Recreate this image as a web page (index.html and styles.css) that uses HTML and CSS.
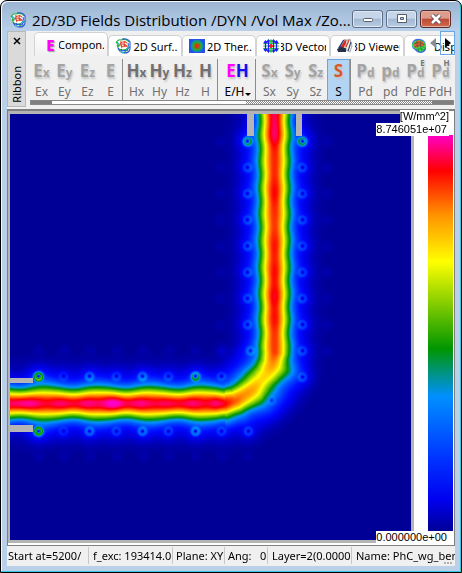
FILE: index.html
```html
<!DOCTYPE html>
<html lang="en">
<head>
    <meta charset="UTF-8">
    <meta name="viewport" content="width=device-width, initial-scale=1.0">
    <title>2D/3D Fields Distribution</title>
    <link rel="stylesheet" href="styles.css">
</head>
<body>
    <svg class="defs" width="0" height="0" aria-hidden="true">
        <symbol id="mesh" viewBox="0 0 16 16">
            <path fill="#fff" d="M3 2 L11 1 L15 5 L15 11 L9 15 L3 12 L1 6Z"/>
            <g fill="none" stroke-width="1.1">
                <path stroke="#e0452a" d="M5 6 Q8 2 12 5 M3 8 Q8 4 12 8 M6 9 Q9 7 13 9 M6 3 Q5 6 7 10 M10 3 Q8 6 10 9"/>
                <path stroke="#1fb53a" d="M1 5 Q3 1 6 2 Q11 0 14 4 M2 7 Q3 12 7 13 M4 11 Q9 14 15 9 M1 4 Q3 6 4 9 M12 10 Q12 13 9 15"/>
                <path stroke="#2b52d8" d="M7 1 Q13 0 15 4 V11 M3 10 Q5 15 10 15 Q14 15 15 11 M6 11 Q7 14 11 12 M13 5 Q14 9 12 13"/>
                <path stroke="#38b8d8" d="M2 4 L5 7 M11 12 L14 8 M5 13 L8 15"/>
            </g>
        </symbol>
    </svg>

    <div class="window">
        <header class="titlebar">
            <svg class="app-icon" aria-hidden="true"><use href="#mesh"/></svg>
            <h1>2D/3D Fields Distribution /DYN /Vol Max /Zo...</h1>
            <div class="caption-buttons">
                <button class="caption-btn" aria-label="Minimize">
                    <svg width="12" height="12" viewBox="0 0 12 12"><rect x="1.5" y="5.5" width="9" height="3" rx="1" fill="#fff" stroke="#535d6b"/></svg>
                </button>
                <button class="caption-btn" aria-label="Maximize">
                    <svg width="12" height="12" viewBox="0 0 12 12"><path fill="#fff" fill-rule="evenodd" stroke="#535d6b" d="M1.5 1.5h9v8h-9z M4.5 4.5h3v2h-3z"/></svg>
                </button>
                <button class="caption-btn close" aria-label="Close">
                    <svg width="12" height="12" viewBox="0 0 12 12"><path stroke="#5f4a4e" stroke-width="4.500" d="M2 2 L10 10 M10 2 L2 10"/><path stroke="#fff" stroke-width="2.600" d="M2 2 L10 10 M10 2 L2 10"/></svg>
                </button>
            </div>
        </header>

        <main class="client">
            <section class="ribbon">
                <div class="ribbon-grip">
                    <button class="ribbon-close" aria-label="Close ribbon">
                        <svg width="8" height="8" viewBox="0 0 8 8"><path stroke="#000" stroke-width="1.5" d="M1 1 L7 7 M7 1 L1 7"/></svg>
                    </button>
                    <span class="ribbon-name">Ribbon</span>
                </div>
                <div class="ribbon-body">
                    <div class="tabs">
                        <button class="tab active"><span class="tab-e" aria-hidden="true">E</span><span class="tab-text">Compon.</span></button>
                        <button class="tab"><svg class="tab-icon" aria-hidden="true"><use href="#mesh"/></svg><span class="tab-text">2D Surf..</span></button>
                        <button class="tab"><i class="tab-icon thermal"></i><span class="tab-text">2D Ther..</span></button>
                        <button class="tab">
                            <svg class="tab-icon" viewBox="0 0 16 16" fill="none" aria-hidden="true">
                                <path stroke="#2fd23a" stroke-width="1" d="M0 5.500h16M0 8h16M0 10.500h16"/>
                                <path stroke="#1a1aff" stroke-width="1.300" d="M2.500 3v10M5.500 2v12M10.500 2v12M13.500 3v10M1 5l1.500-2L4 5M4 4l1.500-2L7 4M9 4l1.500-2L12 4M12 5l1.500-2L15 5M1 11l1.500 2L4 11M4 12l1.500 2L7 12M9 12l1.500 2L12 12M12 11l1.500 2L15 11"/>
                                <path stroke="#21c62b" stroke-width="1.300" d="M8 2v12M6.500 4L8 2l1.500 2M6.500 12L8 14l1.500-2"/>
                                <path stroke="#f02020" stroke-width="1.800" d="M8 6v4M6 8h4"/>
                            </svg>
                            <span class="tab-text">3D Vector</span>
                        </button>
                        <button class="tab">
                            <svg class="tab-icon" viewBox="0 0 16 16" aria-hidden="true">
                                <path fill="#23408e" d="M1 10 L6 2 L9 1 L6 10Z"/>
                                <path fill="#f3c59a" d="M4 8 L8 1 H11 L8 9Z"/>
                                <path fill="#d9281c" d="M3 10 L8 2 L10 3 L6 11Z"/>
                                <path fill="#26304a" d="M0 11 L4 9 L9 10 L9 14 L1 14Z"/>
                                <path fill="#f4f4f4" stroke="#777" stroke-width=".6" d="M9 3 L13 1 L15 8 L13 14 L9 12Z"/>
                                <path stroke="#d0402c" stroke-width="1.300" d="M12 2 L9 9"/>
                                <path stroke="#3a4a70" stroke-width="1.200" d="M14 4 L11 13"/>
                            </svg>
                            <span class="tab-text">3D Viewer</span>
                        </button>
                        <button class="tab">
                            <svg class="tab-icon" viewBox="0 0 16 16" aria-hidden="true">
                                <path fill="#3f6af0" d="M1 5 Q3 0 9 1 Q15 2 15 8 Q16 14 10 15 Q6 15 4 12 Q0 10 1 5Z"/>
                                <path fill="#3ddc48" d="M1 6 Q3 2 9 2 Q14 3 15 8 Q14 12 10 14 Q6 13 5 11 Q1 10 1 6Z"/>
                                <path fill="#f0542c" d="M3 6 Q6 1 10 3 Q14 5 13 8 Q8 8 4 10Z"/>
                                <path fill="none" stroke="#17613a" stroke-width=".5" d="M2 6 Q8 3 14 7 M3 9 Q8 6 14 10 M5 12 Q9 9 14 12 M6 2 Q5 7 8 14 M10 2 Q8 7 11 14"/>
                            </svg>
                            <span class="tab-text tab-text-last">Displ</span>
                        </button>
                        <div class="tab-scroll">
                            <button class="scroll-btn" aria-label="Previous tabs"><svg width="6" height="10" viewBox="0 0 6 10"><path fill="#8c8c8c" d="M6 0v10L0 5z"/></svg></button>
                            <button class="scroll-btn next" aria-label="Next tabs"><svg width="6" height="10" viewBox="0 0 6 10"><path d="M0 0v10l6-5z"/></svg></button>
                        </div>
                    </div>

                    <div class="tools">
                        <div class="group light">
                            <button class="tool"><b aria-hidden="true">E<small>x</small></b><span>Ex</span></button>
                            <button class="tool"><b aria-hidden="true">E<small>y</small></b><span>Ey</span></button>
                            <button class="tool"><b aria-hidden="true">E<small>z</small></b><span>Ez</span></button>
                            <button class="tool"><b aria-hidden="true">E</b><span>E</span></button>
                        </div>
                        <div class="group">
                            <button class="tool"><b aria-hidden="true">H<small>x</small></b><span>Hx</span></button>
                            <button class="tool"><b aria-hidden="true">H<small>y</small></b><span>Hy</span></button>
                            <button class="tool"><b aria-hidden="true">H<small>z</small></b><span>Hz</span></button>
                            <button class="tool"><b aria-hidden="true">H</b><span>H</span></button>
                        </div>
                        <div class="group">
                            <button class="tool eh"><b aria-hidden="true"><em>E</em>H</b><span>E/H<i class="drop"></i></span></button>
                        </div>
                        <div class="group light">
                            <button class="tool"><b aria-hidden="true">S<small>x</small></b><span>Sx</span></button>
                            <button class="tool"><b aria-hidden="true">S<small>y</small></b><span>Sy</span></button>
                            <button class="tool"><b aria-hidden="true">S<small>z</small></b><span>Sz</span></button>
                            <button class="tool selected"><b aria-hidden="true">S</b><span>S</span></button>
                        </div>
                        <div class="group light wide">
                            <button class="tool"><b aria-hidden="true">P<small>d</small></b><span>Pd</span></button>
                            <button class="tool"><b aria-hidden="true">p<small>d</small></b><span>pd</span></button>
                            <button class="tool"><b aria-hidden="true">P<small>d</small><sup>E</sup></b><span>PdE</span></button>
                            <button class="tool"><b aria-hidden="true">P<small>d</small><sup>H</sup></b><span>PdH</span></button>
                        </div>
                    </div>
                    <div class="tool-progress"><i></i></div>
                </div>
            </section>

            <section class="view">
                <div class="plot">
                    <canvas id="field" width="401" height="426"></canvas>
                </div>
                <div class="scale"></div>
                <div class="scale-max">
                    <span class="unit">[W/mm^2]</span>
                    <span class="value">8.746051e+07</span>
                </div>
                <span class="scale-min">0.000000e+00</span>
            </section>

            <footer class="statusbar">
                <span class="start">Start at=5200/</span>
                <span class="freq">f_exc: 193414.0</span>
                <span class="plane">Plane: XY</span>
                <span class="angle">Ang:&nbsp;&nbsp; 0</span>
                <span class="layer">Layer=2(0.0000</span>
                <span class="name">Name: PhC_wg_bend</span>
                <i class="size-grip"></i>
            </footer>
        </main>
    </div>

    <script src="field.js"></script>
</body>
</html>
```

FILE: styles.css
```css
:root {
    --frame: #bad0e8;
    --face: #f0f0f0;
    --wall: #b4b4b4;
    --ui-font: "Noto Sans", "DejaVu Sans", sans-serif;
}
* {
    box-sizing: border-box;
}
body {
    margin: 0;
    background: #fff;
    font-family: var(--ui-font);
    font-size: 12px;
    color: #000;
}
button {
    font: inherit;
    color: inherit;
    margin: 0;
    padding: 0;
    border: none;
    background: none;
}
.defs {
    position: absolute;
}
.window {
    display: flex;
    flex-direction: column;
    height: 100vh;
    padding: 0 6px 6px;
    border: 1px solid #000;
    border-radius: 7px 7px 0 0;
    background: linear-gradient(#9ab4d1, #b9d0ea 30px, var(--frame) 90px);
    box-shadow: inset -1px -1px #35c5e0, inset 1px 1px #f4f9ff;
}

/* title bar */
.titlebar {
    display: flex;
    flex: none;
    height: 30px;
    padding-left: 3px;
}
.app-icon {
    flex: none;
    width: 16px;
    height: 16px;
    margin: 11px 6px 0 0;
}
h1 {
    flex: 1;
    min-width: 0;
    margin: 8px 0 0;
    overflow: hidden;
    white-space: nowrap;
    font-size: 15px;
    line-height: 22px;
    font-weight: 400;
    font-family: "Open Sans", "Noto Sans", sans-serif;
}
.caption-buttons {
    display: flex;
    flex: none;
    gap: 3px;
    margin-top: 9px;
    padding-right: 4px;
}
.caption-btn {
    display: flex;
    align-items: center;
    justify-content: center;
    width: 31px;
    height: 18px;
    border: 1px solid #5d6f87;
    border-radius: 3px;
    background: linear-gradient(#c6d6e8 45%, #a2b8d1 50%, #b9cee5);
    box-shadow: inset 0 0 0 1px #dce8f4;
}
.caption-btn.close {
    border-color: #592a2a;
    background: linear-gradient(#dc9c8c 45%, #bd4a34 50%, #cf6a4c);
    box-shadow: inset 0 0 0 1px #e5b0a4;
}

/* ribbon */
.client {
    display: flex;
    flex: 1;
    flex-direction: column;
    min-height: 0;
    background: var(--face);
}
.ribbon {
    display: flex;
    flex: none;
    height: 76px;
}
.ribbon-grip {
    display: flex;
    flex: none;
    flex-direction: column;
    align-items: center;
    justify-content: space-between;
    width: 19px;
    padding: 5px 0 3px;
    border: 1px solid #b8b8b8;
    background: #dadada;
}
.ribbon-close {
    line-height: 0;
}
.ribbon-name {
    writing-mode: vertical-rl;
    transform: rotate(180deg);
    font-size: 11px;
    line-height: 16px;
}
.ribbon-body {
    display: flex;
    flex: 1;
    flex-direction: column;
    min-width: 0;
    padding-left: 4px;
}
.tabs {
    position: relative;
    display: flex;
    align-items: flex-end;
    height: 25px;
    padding-left: 4px;
    overflow: hidden;
}
.tab {
    display: flex;
    flex: none;
    align-items: center;
    gap: 2px;
    width: 74px;
    height: 21px;
    padding: 0 3px 0 6px;
    overflow: hidden;
    border: 1px solid #d2d2d2;
    border-bottom: none;
    border-radius: 5px 5px 0 0;
    background: #fff;
    font-size: 11px;
}
.tab.active {
    height: 24px;
    padding-left: 9px;
    background: linear-gradient(#fff, var(--face));
}
.tab-icon {
    flex: none;
    width: 16px;
    height: 16px;
}
.tab-e {
    width: 13px;
    color: #f0f;
    font-size: 15px;
    line-height: 16px;
    font-weight: 800;
    text-shadow: 1px 1px 1px #999;
}
.thermal {
    height: 14px;
    border: 1px solid #2a50e8;
    background: radial-gradient(circle, #e03010 15%, #20b030 42%, #1090a0 60%, #2050f0 75%);
}
.tab-text {
    display: flex;
    flex: 1;
    justify-content: center;
    min-width: 0;
    overflow: hidden;
    white-space: nowrap;
}
.tab-text-last {
    flex: none;
    padding-left: 5px;
}
.tab-scroll {
    position: absolute;
    top: 0;
    right: 0;
    display: flex;
}
.scroll-btn {
    display: flex;
    align-items: center;
    justify-content: center;
    width: 15px;
    height: 24px;
}
.scroll-btn.next {
    border: 1px solid #66a7e8;
}
.tools {
    display: flex;
    height: 44px;
    padding-top: 3px;
}
.group {
    display: flex;
    flex: none;
    color: #707070;
    border-right: 1px solid #8c8c8c;
    margin-right: 2px;
}
.group.light b {
    color: #a4a4a4;
}
.tool {
    display: flex;
    flex-direction: column;
    align-items: center;
    width: 23px;
    height: 41px;
    white-space: nowrap;
}
.tool b {
    display: flex;
    align-items: baseline;
    height: 24px;
    font-family: "Open Sans", "Noto Sans", sans-serif;
    font-size: 17px;
    line-height: 24px;
    font-weight: 700;
    text-shadow: 1px 2px 2px #c4c4c4;
}
.tool small {
    font-size: 12px;
}
.tool sup {
    width: 0;
    font-size: 8px;
    line-height: 8px;
    align-self: flex-start;
    color: #777;
    direction: rtl;
}
.tool span {
    font-size: 12px;
    line-height: 17px;
}
.wide .tool {
    width: 25px;
}
.wide {
    border: none;
    margin: 0;
}
.tool.eh {
    width: 35px;
    color: #000;
}
.eh b {
    color: #1010f0;
}
.eh em {
    color: #f0f;
    font-style: normal;
}
.drop {
    display: inline-block;
    border: 3px solid transparent;
    border-top-color: #000;
    border-bottom: none;
}
.tool.selected {
    border: 1px solid #66a7e8;
    border-bottom: none;
    background: #b3d4f2;
    color: #000;
}
.tool.selected b {
    height: 23px;
    line-height: 22px;
    color: #d8592c;
}
.tool-progress {
    display: flex;
    height: 5px;
    margin-right: 1px;
    border: 1px solid #888;
    background: repeating-conic-gradient(#888 0 25%, #fff 0 50%) 0 0 / 2px 2px;
}
.tool-progress::before,
.tool-progress::after {
    content: "";
    width: 5%;
    background: #808080;
}
.tool-progress::after {
    margin-left: auto;
}
.tool-progress i {
    width: 46%;
    background: #fff;
}

/* field view */
.view {
    position: relative;
    display: flex;
    flex: 1;
    min-height: 0;
    margin-top: 2px;
    border: 1px solid #808080;
    border-top: 2px solid #808080;
    background: #fff;
}
.plot {
    flex: 1;
    min-width: 0;
    margin-bottom: 2px;
    padding: 3px 3px 3px 2px;
    background: var(--wall);
}
.plot canvas {
    display: block;
    width: 100%;
    height: 100%;
}
.scale {
    flex: none;
    width: 25px;
    margin: 24px 1px 14px 14px;
    background: linear-gradient(#ff00c8, #f00 9%, #ff9000 20%, #ff0 32%, #009600 54%, #0090ff 66%, #0032ff 82%, #0000f0 92%, #000096);
}
.scale-max {
    position: absolute;
    top: -1px;
    right: 5px;
    display: flex;
    flex-direction: column;
    align-items: flex-end;
    font: 11px/13px "Liberation Sans", Arial, sans-serif;
}
.scale-max span,
.scale-min {
    background: #fff;
}
.scale-max .value {
    padding-right: 2px;
}
.scale-min {
    position: absolute;
    right: 1px;
    bottom: 1px;
    padding-right: 6px;
    font: 11px/13px "Liberation Sans", Arial, sans-serif;
}

/* status bar */
.statusbar {
    position: relative;
    display: flex;
    flex: none;
    height: 20px;
    padding-top: 1px;
    font-size: 11px;
    line-height: 18px;
}
.statusbar span {
    overflow: hidden;
    white-space: nowrap;
    margin-bottom: 2px;
    padding-left: 4px;
    border-right: 1px solid #c8c8c8;
}
.statusbar .start {
    width: 82px;
    padding-left: 1px;
}
.statusbar .freq {
    width: 84px;
}
.statusbar .plane {
    width: 52px;
    padding-left: 3px;
}
.statusbar .angle {
    width: 43px;
    padding-left: 3px;
}
.statusbar .layer {
    width: 84px;
}
.statusbar .name {
    flex: 1;
    min-width: 0;
    border: none;
}
.size-grip {
    position: absolute;
    right: 3px;
    bottom: 2px;
    width: 8px;
    height: 2px;
    background: repeating-linear-gradient(90deg, #b0b0b0 0 2px, transparent 2px 3px);
}
```

FILE: field.js
```js
// colour map, value 0..1
const stops = [
    [0, 0, 0, 150], [0.07, 0, 0, 225], [0.13, 0, 10, 255], [0.338, 0, 144, 255],
    [0.457, 0, 150, 0], [0.68, 255, 255, 0], [0.80, 255, 140, 0],
    [0.909, 255, 0, 0], [1, 255, 0, 200]
];

function colour(t) {
    t = Math.max(0, Math.min(1, t));
    let i = 1;
    while (i < stops.length - 1 && stops[i][0] < t) i++;
    const a = stops[i - 1], b = stops[i];
    const k = (t - a[0]) / (b[0] - a[0]);
    return [1, 2, 3].map(c => a[c] + (b[c] - a[c]) * k);
}

// centre line of the guide: x, y, peak
const guide = [
    [-20, 289, 0.95], [205, 289, 0.95], [214, 289, 0.9], [225, 286, 0.83],
    [234, 280, 0.78], [242, 274, 0.75], [250, 266, 0.7], [256, 259, 0.71],
    [261, 249, 0.77], [264, 238, 0.85], [264, 200, 0.87], [264, 30, 0.88],
    [264, 8, 0.94], [264, -20, 0.96]
];

// hot spots: x, y, height
const peaks = [
    [20, 289, 0.03], [50, 289, 0.02], [78, 289, 0.03], [102, 289, 0.08],
    [129, 289, 0.03], [156, 289, 0.01], [183, 289, 0.03], [207, 289, 0.03],
    [36, 289, -0.03], [64, 289, -0.03], [91, 289, -0.03], [116, 289, -0.03],
    [143, 289, -0.02], [170, 289, -0.03], [195, 289, -0.04],
    [264, 22, 0.05], [264, 78, 0.03], [264, 132, 0.02], [264, 158, 0.03],
    [264, 182, 0.05], [264, 205, 0.03], [264, 230, 0.01], [264, 110, -0.01]
];

// rods: x, y, brightness
const columns = [28, 53, 79, 106, 132, 158, 185, 211];
const light = [0.42, 0.14, 0.22, 0.17, 0.23, 0.17, 0.25, 0.17];
const rods = [];
columns.forEach((x, i) => {
    rods.push([x, 262, i === 6 ? 0.33 : light[i]]);
    rods.push([x, 317, light[i]]);
});
rods.push([238, 317, 0.19]);
for (let i = 0; i < 10; i++) {
    const y = 27 + i * 26.2;
    if (i < 9) rods.push([i < 8 ? 237 : 240, y, i === 0 ? 0.34 : 0.18]);
    rods.push([292, y, i === 0 ? 0.36 : 0.18]);
}
rods.push([261, 286, 0.14]);
const faint = [];
for (let i = 0; i < 9; i++) {
    const x = 28 + i * 26.2;
    faint.push([x, 235], [x, 343]);
    faint.push([209, 27 + i * 26.2], [318, 27 + i * 26.2]);
}

function bell(d2, s) {
    return Math.exp(-d2 / (2 * s * s));
}

function value(x, y) {
    let best = 1e9, peak = 0;
    for (let i = 1; i < guide.length; i++) {
        const [ax, ay, av] = guide[i - 1], [bx, by, bv] = guide[i];
        const dx = bx - ax, dy = by - ay;
        const k = Math.max(0, Math.min(1, ((x - ax) * dx + (y - ay) * dy) / (dx * dx + dy * dy)));
        const d2 = (x - ax - k * dx) ** 2 + (y - ay - k * dy) ** 2;
        if (d2 < best) {
            best = d2;
            peak = av + (bv - av) * k;
        }
    }
    // edge ripple along both arms
    const ripple = x < 215
        ? 0.8 * Math.cos((x - 36) / 8.3)
        : 0.4 * Math.cos((y - 20) / 4.2);
    let v = peak * bell(best, 11.2 + ripple) + 0.09 * bell(best, 24);
    v -= 0.08 * bell(best, 8);
    for (const [px, py, h] of peaks) v += h * bell((x - px) ** 2 + (y - py) ** 2, 8);
    // spill on both sides of the bend
    v += 0.15 * bell((x - 280) ** 2 + (y - 258) ** 2, 10);
    v += 0.12 * bell((x - 254) ** 2 + (y - 293) ** 2, 11);
    v += 0.07 * bell((x - 272) ** 2 + (y - 280) ** 2, 11);
    v += 0.07 * bell((x - 232) ** 2 + (y - 250) ** 2, 11);

    for (const [rx, ry, h] of rods) {
        const d2 = (x - rx) ** 2 + (y - ry) ** 2;
        if (d2 > 900) continue;
        const d = Math.sqrt(d2);
        v *= 1 - 0.45 * bell(d2, 4);
        v += (h - 0.06) * bell((d - 3) ** 2, 1.6) + (0.02 + h * 0.2) * bell(d2, 8);
        // null beside the rod centre
        v -= 0.4 * h * bell((x - rx) ** 2 + (y - ry + 1) ** 2, 1.4);
    }
    for (const [fx, fy] of faint) {
        const d2 = (x - fx) ** 2 + (y - fy) ** 2;
        if (d2 < 200) v += 0.02 * bell(d2, 4);
    }
    return v - 0.008;
}

const canvas = document.getElementById('field');
const ctx = canvas.getContext('2d');
const img = ctx.createImageData(canvas.width, canvas.height);
for (let y = 0, p = 0; y < canvas.height; y++) {
    for (let x = 0; x < canvas.width; x++) {
        const [r, g, b] = colour(value(x, y));
        img.data[p++] = r;
        img.data[p++] = g;
        img.data[p++] = b;
        img.data[p++] = 255;
    }
}
ctx.putImageData(img, 0, 0);

// port walls
ctx.fillStyle = '#b4b4b4';
ctx.fillRect(237, 0, 7, 22);
ctx.fillRect(286, 0, 6, 22);
ctx.fillRect(0, 264, 23, 5);
ctx.fillRect(0, 311, 23, 7);
```
